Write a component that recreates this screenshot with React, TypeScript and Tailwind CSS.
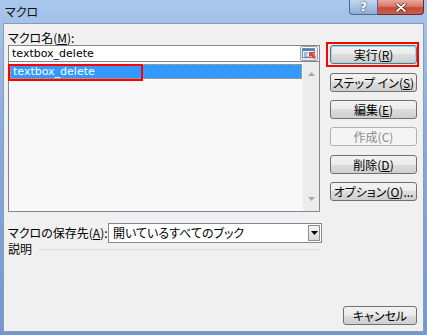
import clsx from 'clsx'
import type { ReactNode } from 'react'

const jp = "whitespace-nowrap font-['Noto_Sans_CJK_JP',sans-serif] [font-feature-settings:'palt']"

function Btn({ children, disabled, main, className }: { children: ReactNode; disabled?: boolean; main?: boolean; className?: string }) {
  return (
    <div className={clsx('relative', className)}>
      <button
        type="button"
        className={clsx(
          'flex h-[19px] w-full items-center justify-center rounded-[3px] border text-[12px] leading-none',
          jp,
          disabled
            ? 'border-[#adb2b5] bg-[#f4f4f4] text-[#8b8b8b]'
            : 'border-[#707070] bg-[linear-gradient(#f2f2f2_0%,#ebebeb_50%,#dddddd_50%,#cfcfcf_100%)] text-black',
          main && 'border-[#3c7fb1] shadow-[inset_0_0_0_1px_#8fdcf5]',
        )}
      >
        {children}
      </button>
      {main && <div className="pointer-events-none absolute -left-[4px] -top-[3px] h-[25px] w-[93px] border-2 border-[#ff0000]" />}
    </div>
  )
}

function PickIcon() {
  return (
    <svg width="14" height="11" viewBox="0 0 14 11">
      <rect x="0.5" y="0.5" width="12" height="9" fill="#f4f7fb" stroke="#6a8bb5" />
      <rect x="1" y="1" width="11" height="2" fill="#4f7fc0" />
      <path d="M2 5h4M2 7h3M2 9h4" stroke="#4f7fc0" />
      <path d="M7 4l6 0-2 2 3 3-2 2-3-3-2 2z" fill="#e0462a" />
    </svg>
  )
}

export default function App() {
  return (
    <div className="flex h-[335px] w-[427px] flex-col overflow-hidden bg-[linear-gradient(180deg,#a9c6ec_0%,#86abdd_40%,#7099d2_100%)] px-[3px] pb-[3px]">
      <div className="flex h-[23px] items-center justify-between">
        <span className={clsx('pl-[2px] text-[12px] text-[#111]', jp)}>マクロ</span>
        <div className="flex self-start">
          <div className="flex h-[15px] w-[29px] items-center justify-center rounded-bl-[4px] border border-t-0 border-[#4d6a91] bg-[linear-gradient(#c5d7ee_0%,#a9c2e3_50%,#8eaad3_100%)] font-['DejaVu_Sans',sans-serif] text-[12px] font-bold leading-none text-white [text-shadow:0_0_2px_#223]">?</div>
          <div className="flex h-[15px] w-[46px] items-center justify-center rounded-br-[4px] border border-l-0 border-t-0 border-[#6b2b24] bg-[linear-gradient(#e8a89c_0%,#d77a6a_45%,#c24a38_55%,#c9614c_100%)]">
            <svg width="12" height="9" viewBox="0 0 12 9">
              <path d="M2 1l8 7M10 1l-8 7" stroke="#3c1712" strokeWidth="3" strokeLinecap="round" />
              <path d="M2 1l8 7M10 1l-8 7" stroke="#fff" strokeWidth="1.8" strokeLinecap="round" />
            </svg>
          </div>
        </div>
      </div>

      <div className="flex flex-1 flex-col border border-[#8a9bb2] bg-[#f0f0f0] pl-[4px] pr-[6px] pb-[6px]">
        <div className="flex pt-[6px]">
          <div className="flex w-[312px] flex-col">
            <div className={clsx('h-[15px] text-[12px] leading-[15px] text-black', jp)}>
              マクロ名(<u>M</u>):
            </div>
            <div className="flex h-[17px] items-center justify-between border border-[#828790] bg-white pl-[3px] pr-[1px]">
              <span className="font-['DejaVu_Sans',sans-serif] text-[11px] leading-none text-black">textbox_delete</span>
              <div className="flex h-[15px] w-[18px] items-center justify-center rounded-[2px] border border-[#9aa3ad] bg-[linear-gradient(#fafafa,#e3e3e3)]">
                <PickIcon />
              </div>
            </div>
            <div className="relative flex h-[150px] border border-t-0 border-[#828790] bg-[#f8f8f8]">
              <div className="flex-1 pl-[1px] pt-[2px]">
                <div className="flex h-[15px] items-center border border-dotted border-[#f0a030] bg-[#3399ff] pl-[2px]">
                  <span className="font-['DejaVu_Sans',sans-serif] text-[11px] leading-none text-white">textbox_delete</span>
                </div>
              </div>
              <div className="ml-[1px] flex w-[16px] flex-col items-center justify-between bg-[#ececec] py-[10px]">
                <svg width="7" height="4" viewBox="0 0 7 4"><path d="M3.5 0L7 4H0z" fill="#a8a8a8" /></svg>
                <svg width="7" height="4" viewBox="0 0 7 4"><path d="M0 0h7L3.5 4z" fill="#a8a8a8" /></svg>
              </div>
              <div className="pointer-events-none absolute -left-[1px] top-[2px] h-[17px] w-[135px] border-2 border-[#ff0000]" />
            </div>
          </div>

          <div className="ml-[10px] flex w-[87px] flex-col pt-[15px]">
            <Btn main>実行(<u>R</u>)</Btn>
            <Btn className="mt-[9px]">ステップ イン(<u>S</u>)</Btn>
            <Btn className="mt-[8px]">編集(<u>E</u>)</Btn>
            <Btn className="mt-[8px]" disabled>作成(C)</Btn>
            <Btn className="mt-[9px]">削除(<u>D</u>)</Btn>
            <Btn className="mt-[8px]">オプション(<u>O</u>)...</Btn>
          </div>
        </div>

        <div className="mt-[11px] flex h-[20px] w-[314px] items-center">
          <span className={clsx('w-[100px] text-[12px] leading-none text-black', jp)}>
            マクロの保存先(<u>A</u>):
          </span>
          <div className="flex h-[20px] flex-1 items-center justify-between border border-[#828790] bg-white pl-[4px] pr-[1px]">
            <span className={clsx('text-[12px] leading-none text-black', jp)}>開いているすべてのブック</span>
            <div className="flex h-[16px] w-[12px] items-center justify-center border border-[#8f8f8f] bg-[linear-gradient(#f4f4f4,#d9d9d9)]">
              <svg width="7" height="4" viewBox="0 0 7 4"><path d="M0 0h7L3.5 4z" fill="#000" /></svg>
            </div>
          </div>
        </div>

        <div className="flex h-[12px] w-[312px] items-center">
          <span className={clsx('text-[12px] leading-none text-black', jp)}>説明</span>
          <div className="ml-[6px] h-px flex-1 bg-[#d5dfe5]" />
        </div>

        <div className="mt-auto flex justify-end">
          <Btn className="w-[74px]">キャンセル</Btn>
        </div>
      </div>
    </div>
  )
}
